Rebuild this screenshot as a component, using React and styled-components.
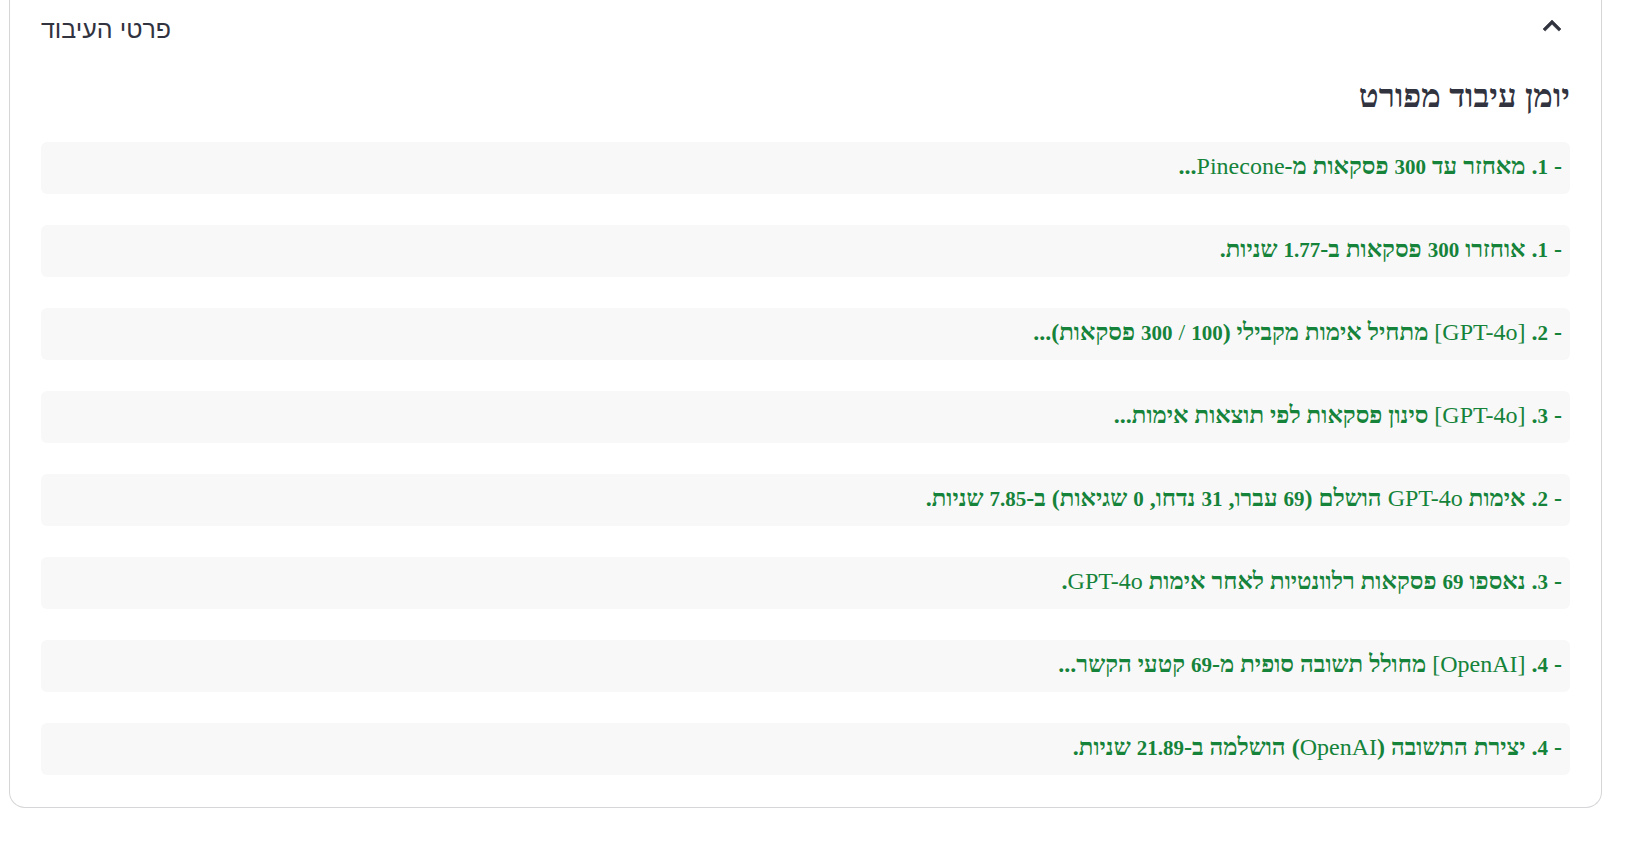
import React, { useState } from "react";
import styled, { createGlobalStyle } from "styled-components";

const GlobalStyle = createGlobalStyle`
  *, *::before, *::after { box-sizing: border-box; }
  body { margin: 0; background: #ffffff; color: #31333f; }
`;

const Page = styled.main`
  padding: 0 43px 48px 9px;
`;

const Card = styled.section`
  border: 1px solid #d6d6d9;
  border-top: 0;
  border-radius: 0 0 16px 16px;
  padding: 0 31px 32px;
`;

const Summary = styled.button`
  display: flex;
  align-items: center;
  justify-content: space-between;
  width: 100%;
  height: 58px;
  padding: 0;
  border: 0;
  background: none;
  color: inherit;
  font: 400 25px/32px "Liberation Sans", sans-serif;
  text-align: left;
  cursor: pointer;
`;

const Chevron = styled.svg`
  width: 36px;
  height: 36px;
  margin-bottom: 6px;
  fill: currentColor;
  stroke: currentColor;
  stroke-width: 0.4;
  transform: ${({ $open }) => ($open ? "none" : "rotate(180deg)")};
`;

const Body = styled.div`
  direction: rtl;
  font-family: "Liberation Serif", serif;
`;

const Title = styled.h2`
  margin: 0;
  padding: 20px 0 28px;
  font-size: 33px;
  line-height: 36px;
  font-weight: 700;
`;

const Log = styled.ul`
  display: flex;
  flex-direction: column;
  gap: 31px;
  margin: 0;
  padding: 0;
  list-style: none;
`;

const Entry = styled.li`
  min-height: 52px;
  padding: 8px;
  border-radius: 6px;
  background: #f8f8f8;
  color: #15833a;
  font-size: 24px;
  line-height: 32px;
  font-weight: 700;
`;

const Latin = styled.span`
  font-weight: 400;
`;

const Figure = styled.span`
  font-size: 21px;
  line-height: 21px;
`;

const entries = [
  "- 1. מאחזר עד 300 פסקאות מ-Pinecone...",
  "- 1. אוחזרו 300 פסקאות ב-1.77 שניות.",
  "- 2. [GPT-4o] מתחיל אימות מקבילי (100 / 300 פסקאות)...",
  "- 3. [GPT-4o] סינון פסקאות לפי תוצאות אימות...",
  "- 2. אימות GPT-4o הושלם (69 עברו, 31 נדחו, 0 שגיאות) ב-7.85 שניות.",
  "- 3. נאספו 69 פסקאות רלוונטיות לאחר אימות GPT-4o.",
  "- 4. [OpenAI] מחולל תשובה סופית מ-69 קטעי הקשר...",
  "- 4. יצירת התשובה (OpenAI) הושלמה ב-21.89 שניות.",
];

// Splits an entry into Hebrew text, Latin names and figures.
const RUNS = /(\[?[A-Z][A-Za-z]+(?:-4o)?\]?|\/|\d+(?:\.\d+)?)/;

function renderRun(run, i) {
  if (/^(\[?[A-Z]|\/)/.test(run)) return <Latin key={i}>{run}</Latin>;
  if (/^\d/.test(run)) return <Figure key={i}>{run}</Figure>;
  return run;
}

export default function App() {
  const [open, setOpen] = useState(true);
  return (
    <Page lang="he">
      <GlobalStyle />
      <Card>
        <Summary type="button" aria-expanded={open} onClick={() => setOpen(!open)}>
          <span>פרטי העיבוד</span>
          <Chevron $open={open} viewBox="0 0 24 24" aria-hidden="true">
            <path d="M12 8l-6 6 1.41 1.41L12 10.83l4.59 4.58L18 14z" />
          </Chevron>
        </Summary>
        {open && (
          <Body>
            <Title>יומן עיבוד מפורט</Title>
            <Log>
              {entries.map((entry) => (
                <Entry key={entry}>{entry.split(RUNS).map(renderRun)}</Entry>
              ))}
            </Log>
          </Body>
        )}
      </Card>
    </Page>
  );
}
